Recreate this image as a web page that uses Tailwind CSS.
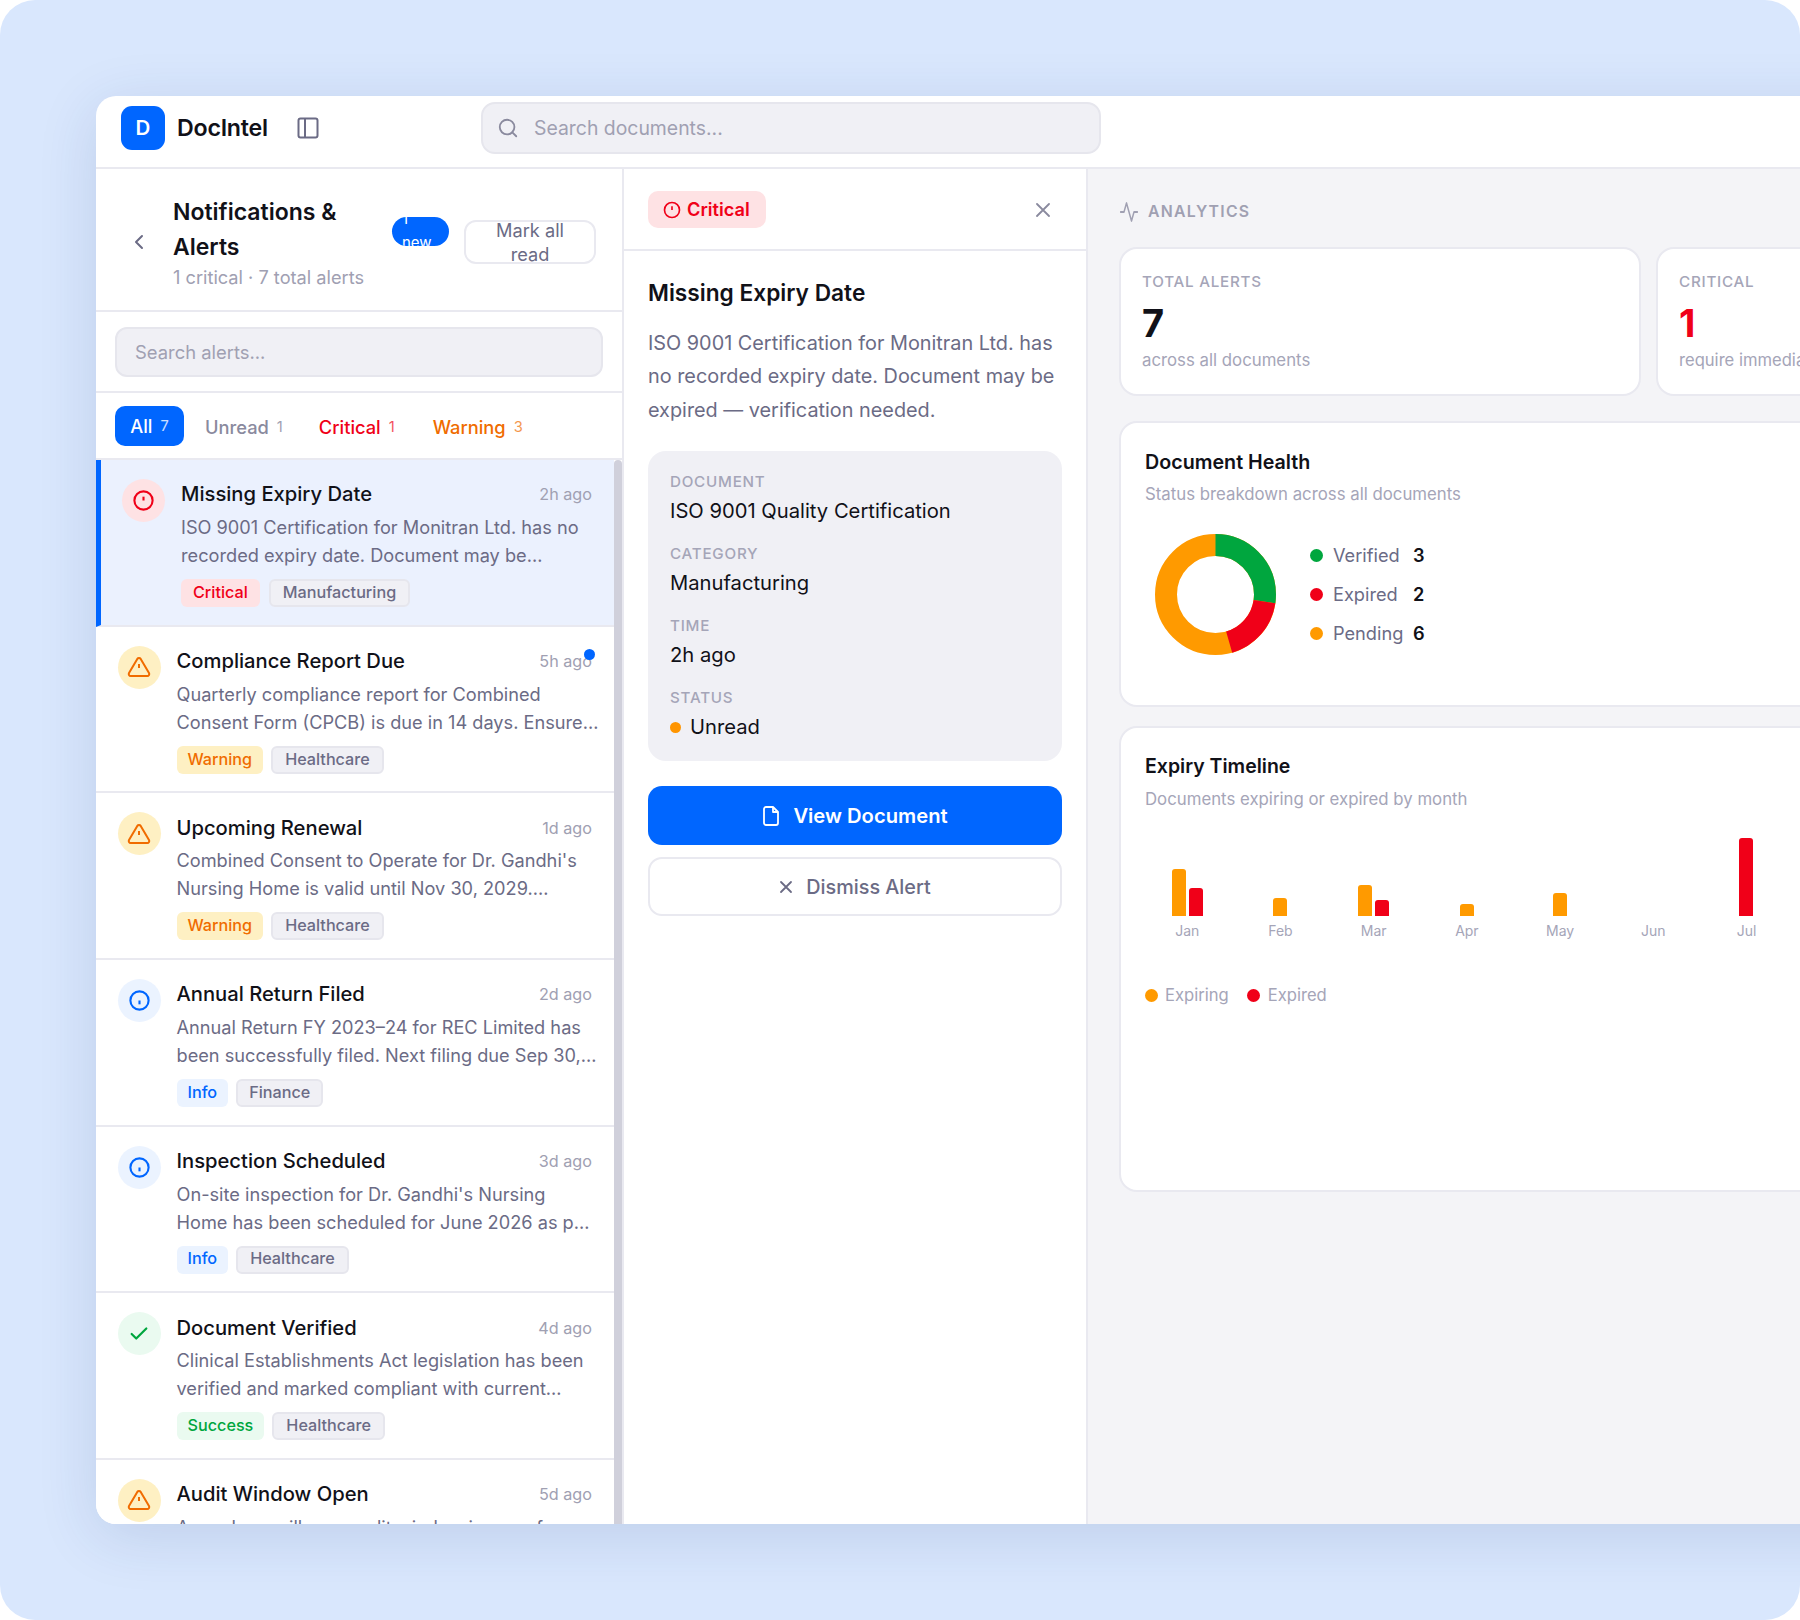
<!DOCTYPE html>
<html><head><meta charset="utf-8"><script src="https://cdn.jsdelivr.net/npm/@tailwindcss/browser@4"></script></head>
<body class="bg-white">
<div class="relative w-[1800px] h-[1620px] rounded-[35px] bg-[#d9e7fd] overflow-hidden font-['Inter','Liberation_Sans',sans-serif] text-[#111118]">
<div class="absolute left-[96px] top-[96px] w-[1800px] h-[1428px] rounded-[20px] bg-white overflow-hidden shadow-[0_12px_60px_rgba(30,60,120,0.14)] flex flex-col">
  <header class="h-[73px] shrink-0 flex items-center border-b-2 border-[#e9e9f0] pl-[25px] pb-[7px]">
    <div class="w-[44px] h-[44px] rounded-[11px] bg-[#0066ff] text-white flex items-center justify-center text-[20.5px] font-semibold">D</div>
    <div class="ml-[12px] text-[23.2px] font-semibold tracking-[-0.01em] w-[93px]">DocIntel</div>
    <svg class="ml-[26px]" width="24" height="24" viewBox="0 0 24 24" fill="none" stroke="#6b6b85" stroke-width="2"><rect x="2.5" y="2.5" width="19" height="19" rx="2"/><path d="M9 2.5v19"/></svg>
    <div class="ml-[161px] w-[620px] h-[52px] rounded-[14px] bg-[#f0f0f5] border-2 border-[#e6e6ed] flex items-center pl-[14px]">
      <svg width="22" height="22" viewBox="0 0 24 24" fill="none" stroke="#8a8a9e" stroke-width="2" stroke-linecap="round"><circle cx="11" cy="11" r="8"/><path d="M21 21l-4.3-4.3"/></svg>
      <span class="ml-[15px] text-[19.4px] text-[#a0a0b2] pt-[1px]">Search documents...</span>
    </div>
  </header>
  <div class="flex flex-1 min-h-0">
    <aside class="w-[528px] shrink-0 border-r-2 border-[#e9e9f0] flex flex-col">
      <div class="h-[143px] shrink-0 border-b-2 border-[#e9e9f0] flex items-center pl-[35px] pt-[5px]">
        <svg width="16" height="20" viewBox="0 0 16 20" fill="none" stroke="#6b6b85" stroke-width="2" stroke-linecap="round" stroke-linejoin="round"><path d="M11 4l-6 6 6 6"/></svg>
        <div class="ml-[26px] w-[219px] shrink-0 pt-[1px]">
          <div class="text-[23px] font-semibold leading-[35px]">Notifications &amp; Alerts</div>
          <div class="text-[18.2px] leading-[28px] text-[#a0a0b2] mt-[-2px]">1 critical · 7 total alerts</div>
        </div>
        <div class="w-[57px] h-[29px] rounded-full bg-[#0066ff] text-white text-[15px] leading-[24px] pl-[10px] overflow-hidden flex flex-col items-start justify-center mt-[-22px] shrink-0"><span>1</span><span>new</span></div>
        <div class="ml-[15px] w-[132px] h-[44px] rounded-[12px] border-2 border-[#e9e9f0] text-[18.2px] leading-[24px] text-[#6b6b85] text-center flex items-center justify-center overflow-hidden shrink-0"><span>Mark all<br>read</span></div>
      </div>
      <div class="h-[81px] shrink-0 border-b-2 border-[#e9e9f0] flex items-center pl-[19px]">
        <div class="w-[488px] h-[50px] rounded-[12px] bg-[#f0f0f5] border-2 border-[#e6e6ed] flex items-center pl-[18px] pt-[2px] text-[18.4px] text-[#a0a0b2]">Search alerts...</div>
      </div>
      <div class="h-[67px] shrink-0 border-b-2 border-[#e9e9f0] flex items-center pl-[19px] text-[18.3px]">
        <div class="w-[69px] h-[40px] rounded-[10px] bg-[#0066ff] text-white flex items-center justify-center gap-[8px] font-medium pt-[2px]"><span>All</span><span class="text-[14.7px] font-normal text-white/80">7</span></div>
        <div class="ml-[21px] flex items-center gap-[8px] text-[#8a8a9e] font-medium pt-[4px]"><span>Unread</span><span class="text-[14.7px] font-normal text-[#a0a0b2]">1</span></div>
        <div class="ml-[36px] flex items-center gap-[8px] text-[#f00018] font-medium pt-[4px]"><span>Critical</span><span class="text-[14.7px] font-normal opacity-70">1</span></div>
        <div class="ml-[38px] flex items-center gap-[8px] text-[#f06c00] font-medium pt-[4px]"><span>Warning</span><span class="text-[14.7px] font-normal opacity-70">3</span></div>
      </div>
      <div class="relative flex-1 min-h-0 overflow-hidden pr-[8px] bg-white">
        <div class="absolute right-0 top-0 bottom-0 w-[8px] bg-[#d0d0db] rounded-t-[4px]"></div>

        <article class="relative h-[166.67px] border-b-2 border-[#e9e9f0] bg-[#ebf1fe] border-l-[5px] border-l-[#0066ff] pl-[21px] pr-[22px] pt-[19px] flex gap-[16px]">
          <div class="w-[43px] h-[43px] rounded-full bg-[#fee2e4] flex items-center justify-center shrink-0"><svg width="23" height="23" viewBox="0 0 24 24" fill="none" stroke="#f00018" stroke-width="2.2"><circle cx="12" cy="12" r="9.5"/><path d="M12 8v4"/></svg></div>
          <div class="flex-1 min-w-0">
            <div class="flex justify-between items-center h-[30px] pt-[1px]"><span class="text-[20.2px] font-medium">Missing Expiry Date</span><span class="text-[16.2px] text-[#a0a0b2]">2h ago</span></div>
            <p class="text-[18.2px] leading-[28px] text-[#6b6b85] mt-[4px] whitespace-nowrap">ISO 9001 Certification for Monitran Ltd. has no<br>recorded expiry date. Document may be…</p>
            <div class="flex gap-[9px] mt-[10px]"><span class="h-[28px] px-[12px] pb-[2px] rounded-[6px] bg-[#fee2e4] text-[#f00018] text-[16.2px] font-medium flex items-center">Critical</span><span class="h-[28px] px-[12px] pb-[2px] rounded-[6px] bg-[#f0f0f5] border-2 border-[#e6e6ed] text-[#6b6b85] text-[16.2px] font-medium flex items-center">Manufacturing</span></div>
          </div>
        </article>

        <article class="relative h-[166.67px] border-b-2 border-[#e9e9f0] pl-[21.5px] pr-[22px] pt-[19px] flex gap-[16px]">
          <div class="w-[43px] h-[43px] rounded-full bg-[#fef0c3] flex items-center justify-center shrink-0"><svg width="24" height="24" viewBox="0 0 24 24" fill="none" stroke="#f06c00" stroke-width="2" stroke-linecap="round" stroke-linejoin="round"><path d="M10.3 3.9L2 18a2 2 0 0 0 1.7 3h16.6a2 2 0 0 0 1.7-3L13.7 3.9a2 2 0 0 0-3.4 0z"/><path d="M12 9v4" stroke-linecap="butt"/></svg></div>
          <div class="flex-1 min-w-0">
            <div class="flex justify-between items-center h-[30px] pt-[1px]"><span class="text-[20.2px] font-medium">Compliance Report Due</span><span class="text-[16.2px] text-[#a0a0b2]">5h ago</span></div>
            <p class="text-[18.2px] leading-[28px] text-[#6b6b85] mt-[4px] whitespace-nowrap">Quarterly compliance report for Combined<br>Consent Form (CPCB) is due in 14 days. Ensure…</p>
            <div class="flex gap-[8px] mt-[10px]"><span class="h-[28px] px-[11px] pb-[2px] rounded-[6px] bg-[#fef0c3] text-[#f06c00] text-[16.2px] font-medium flex items-center">Warning</span><span class="h-[28px] px-[12px] pb-[2px] rounded-[6px] bg-[#f0f0f5] border-2 border-[#e6e6ed] text-[#6b6b85] text-[16.2px] font-medium flex items-center">Healthcare</span></div>
          </div>
          <div class="absolute top-[22px] right-[19px] w-[11px] h-[11px] rounded-full bg-[#0066ff]"></div>
        </article>

        <article class="relative h-[166.67px] border-b-2 border-[#e9e9f0] pl-[21.5px] pr-[22px] pt-[19px] flex gap-[16px]">
          <div class="w-[43px] h-[43px] rounded-full bg-[#fef0c3] flex items-center justify-center shrink-0"><svg width="24" height="24" viewBox="0 0 24 24" fill="none" stroke="#f06c00" stroke-width="2" stroke-linecap="round" stroke-linejoin="round"><path d="M10.3 3.9L2 18a2 2 0 0 0 1.7 3h16.6a2 2 0 0 0 1.7-3L13.7 3.9a2 2 0 0 0-3.4 0z"/><path d="M12 9v4" stroke-linecap="butt"/></svg></div>
          <div class="flex-1 min-w-0">
            <div class="flex justify-between items-center h-[30px] pt-[1px]"><span class="text-[20.2px] font-medium">Upcoming Renewal</span><span class="text-[16.2px] text-[#a0a0b2]">1d ago</span></div>
            <p class="text-[18.2px] leading-[28px] text-[#6b6b85] mt-[4px] whitespace-nowrap">Combined Consent to Operate for Dr. Gandhi's<br>Nursing Home is valid until Nov 30, 2029.…</p>
            <div class="flex gap-[8px] mt-[10px]"><span class="h-[28px] px-[11px] pb-[2px] rounded-[6px] bg-[#fef0c3] text-[#f06c00] text-[16.2px] font-medium flex items-center">Warning</span><span class="h-[28px] px-[12px] pb-[2px] rounded-[6px] bg-[#f0f0f5] border-2 border-[#e6e6ed] text-[#6b6b85] text-[16.2px] font-medium flex items-center">Healthcare</span></div>
          </div>
        </article>

        <article class="relative h-[166.67px] border-b-2 border-[#e9e9f0] pl-[21.5px] pr-[22px] pt-[19px] flex gap-[16px]">
          <div class="w-[43px] h-[43px] rounded-full bg-[#ebf3ff] flex items-center justify-center shrink-0"><svg width="23" height="23" viewBox="0 0 24 24" fill="none" stroke="#0066ff" stroke-width="2.2"><circle cx="12" cy="12" r="9.5"/><path d="M12 12v4"/></svg></div>
          <div class="flex-1 min-w-0">
            <div class="flex justify-between items-center h-[30px] pt-[1px]"><span class="text-[20.2px] font-medium">Annual Return Filed</span><span class="text-[16.2px] text-[#a0a0b2]">2d ago</span></div>
            <p class="text-[18.2px] leading-[28px] text-[#6b6b85] mt-[4px] whitespace-nowrap">Annual Return FY 2023–24 for REC Limited has<br>been successfully filed. Next filing due Sep 30,…</p>
            <div class="flex gap-[8px] mt-[10px]"><span class="h-[28px] px-[11px] pb-[2px] rounded-[6px] bg-[#ebf3ff] text-[#0066ff] text-[16.2px] font-medium flex items-center">Info</span><span class="h-[28px] px-[11px] pb-[2px] rounded-[6px] bg-[#f0f0f5] border-2 border-[#e6e6ed] text-[#6b6b85] text-[16.2px] font-medium flex items-center">Finance</span></div>
          </div>
        </article>

        <article class="relative h-[166.67px] border-b-2 border-[#e9e9f0] pl-[21.5px] pr-[22px] pt-[19px] flex gap-[16px]">
          <div class="w-[43px] h-[43px] rounded-full bg-[#ebf3ff] flex items-center justify-center shrink-0"><svg width="23" height="23" viewBox="0 0 24 24" fill="none" stroke="#0066ff" stroke-width="2.2"><circle cx="12" cy="12" r="9.5"/><path d="M12 12v4"/></svg></div>
          <div class="flex-1 min-w-0">
            <div class="flex justify-between items-center h-[30px] pt-[1px]"><span class="text-[20.2px] font-medium">Inspection Scheduled</span><span class="text-[16.2px] text-[#a0a0b2]">3d ago</span></div>
            <p class="text-[18.2px] leading-[28px] text-[#6b6b85] mt-[4px] whitespace-nowrap">On-site inspection for Dr. Gandhi's Nursing<br>Home has been scheduled for June 2026 as p…</p>
            <div class="flex gap-[8px] mt-[10px]"><span class="h-[28px] px-[11px] pb-[2px] rounded-[6px] bg-[#ebf3ff] text-[#0066ff] text-[16.2px] font-medium flex items-center">Info</span><span class="h-[28px] px-[12px] pb-[2px] rounded-[6px] bg-[#f0f0f5] border-2 border-[#e6e6ed] text-[#6b6b85] text-[16.2px] font-medium flex items-center">Healthcare</span></div>
          </div>
        </article>

        <article class="relative h-[166.67px] border-b-2 border-[#e9e9f0] pl-[21.5px] pr-[22px] pt-[19px] flex gap-[16px]">
          <div class="w-[43px] h-[43px] rounded-full bg-[#eafaf0] flex items-center justify-center shrink-0"><svg width="22" height="22" viewBox="0 0 24 24" fill="none" stroke="#00a63e" stroke-width="2.4" stroke-linecap="round" stroke-linejoin="round"><path d="M20 6L9 17l-5-5"/></svg></div>
          <div class="flex-1 min-w-0">
            <div class="flex justify-between items-center h-[30px] pt-[1px]"><span class="text-[20.2px] font-medium">Document Verified</span><span class="text-[16.2px] text-[#a0a0b2]">4d ago</span></div>
            <p class="text-[18.2px] leading-[28px] text-[#6b6b85] mt-[4px] whitespace-nowrap">Clinical Establishments Act legislation has been<br>verified and marked compliant with current…</p>
            <div class="flex gap-[8px] mt-[10px]"><span class="h-[28px] px-[11px] pb-[2px] rounded-[6px] bg-[#eafaf0] text-[#00a63e] text-[16.2px] font-medium flex items-center">Success</span><span class="h-[28px] px-[12px] pb-[2px] rounded-[6px] bg-[#f0f0f5] border-2 border-[#e6e6ed] text-[#6b6b85] text-[16.2px] font-medium flex items-center">Healthcare</span></div>
          </div>
        </article>

        <article class="relative h-[166.67px] pl-[21.5px] pr-[22px] pt-[19px] flex gap-[16px]">
          <div class="w-[43px] h-[43px] rounded-full bg-[#fef0c3] flex items-center justify-center shrink-0"><svg width="24" height="24" viewBox="0 0 24 24" fill="none" stroke="#f06c00" stroke-width="2" stroke-linecap="round" stroke-linejoin="round"><path d="M10.3 3.9L2 18a2 2 0 0 0 1.7 3h16.6a2 2 0 0 0 1.7-3L13.7 3.9a2 2 0 0 0-3.4 0z"/><path d="M12 9v4" stroke-linecap="butt"/></svg></div>
          <div class="flex-1 min-w-0">
            <div class="flex justify-between items-center h-[30px] pt-[1px]"><span class="text-[20.2px] font-medium">Audit Window Open</span><span class="text-[16.2px] text-[#a0a0b2]">5d ago</span></div>
            <p class="text-[18.2px] leading-[28px] text-[#6b6b85] mt-[4px] whitespace-nowrap">Annual surveillance audit window is open for</p>
          </div>
        </article>
      </div>
    </aside>

    <section class="w-[464px] shrink-0 border-r-2 border-[#e9e9f0] flex flex-col">
      <div class="h-[82px] shrink-0 border-b-2 border-[#e9e9f0] flex items-center justify-between pl-[24px] pr-[36px] pt-[1px]">
        <div class="h-[37px] w-[118px] rounded-[10px] bg-[#fee2e4] text-[#f00018] flex items-center pl-[15px] gap-[6px] text-[18.2px] font-semibold"><svg width="18" height="18" viewBox="0 0 24 24" fill="none" stroke="#f00018" stroke-width="2.2"><circle cx="12" cy="12" r="10"/><path d="M12 7v5"/></svg>Critical</div>
        <svg width="14" height="14" viewBox="0 0 14 14" fill="none" stroke="#8a8a9e" stroke-width="1.8" stroke-linecap="round"><path d="M1 1l12 12M13 1L1 13"/></svg>
      </div>
      <div class="pl-[24px] pr-[24px] pt-[24px]">
        <h2 class="text-[22.7px] font-semibold leading-[35px]">Missing Expiry Date</h2>
        <p class="mt-[17px] text-[19.85px] leading-[33.3px] text-[#6b6b85] whitespace-nowrap">ISO 9001 Certification for Monitran Ltd. has<br>no recorded expiry date. Document may be<br>expired — verification needed.</p>
        <div class="mt-[24px] h-[310px] rounded-[18px] bg-[#f0f0f5] px-[22px] pt-[20px]">
          <div class="text-[15.2px] leading-[22px] tracking-[0.05em] font-medium text-[#a5a5b8]">DOCUMENT</div>
          <div class="text-[20.2px] leading-[30px] mt-[3px]">ISO 9001 Quality Certification</div>
          <div class="text-[15.2px] leading-[22px] tracking-[0.05em] font-medium text-[#a5a5b8] mt-[17.2px]">CATEGORY</div>
          <div class="text-[20.2px] leading-[30px] mt-[3px]">Manufacturing</div>
          <div class="text-[15.2px] leading-[22px] tracking-[0.05em] font-medium text-[#a5a5b8] mt-[17.2px]">TIME</div>
          <div class="text-[20.2px] leading-[30px] mt-[3px]">2h ago</div>
          <div class="text-[15.2px] leading-[22px] tracking-[0.05em] font-medium text-[#a5a5b8] mt-[17.2px]">STATUS</div>
          <div class="text-[20.2px] leading-[30px] mt-[3px] flex items-center gap-[9px]"><span class="w-[11px] h-[11px] rounded-full bg-[#ff9500]"></span>Unread</div>
        </div>
        <div class="mt-[25px] h-[59px] rounded-[14px] bg-[#0066ff] text-white flex items-center justify-center gap-[13px] text-[20.2px] font-semibold pt-[1px]">
          <svg width="18" height="20" viewBox="0 0 18 20" fill="none" stroke="white" stroke-width="1.8" stroke-linejoin="round"><path d="M2 3a2 2 0 0 1 2-2h7l5 5v11a2 2 0 0 1-2 2H4a2 2 0 0 1-2-2z"/><path d="M11 1v5h5"/></svg>View Document</div>
        <div class="mt-[12px] h-[59px] rounded-[14px] border-2 border-[#e9e9f0] text-[#6b6b85] flex items-center justify-center gap-[13px] text-[19.8px] font-medium pt-[2px]">
          <svg width="14" height="14" viewBox="0 0 14 14" fill="none" stroke="#6b6b85" stroke-width="1.8" stroke-linecap="round"><path d="M2 2l10 10M12 2L2 12"/></svg>Dismiss Alert</div>
      </div>
    </section>

    <main class="flex-1 min-w-0 bg-[#f4f4f7] pl-[31px] overflow-hidden">
      <div class="h-[78px] flex items-center gap-[9px] text-[#a0a0b2] pt-[8px]">
        <svg width="20" height="24" viewBox="0 0 24 24" preserveAspectRatio="none" fill="none" stroke="#a0a0b2" stroke-width="1.8" stroke-linecap="round" stroke-linejoin="round"><path d="M22 12h-4l-3 9L9 3l-3 9H2"/></svg>
        <span class="text-[15.8px] font-semibold tracking-[0.08em]">ANALYTICS</span>
      </div>
      <div class="flex gap-[15px] w-[1100px]">
        <div class="w-[522px] h-[149px] shrink-0 rounded-[18px] bg-white border-2 border-[#e9e9f0] pl-[21px] pt-[22px]">
          <div class="text-[15.2px] leading-[22px] font-medium tracking-[0.05em] text-[#a5a5b8]">TOTAL ALERTS</div>
          <div class="text-[38px] leading-[44px] font-bold mt-[8px]">7</div>
          <div class="text-[16.8px] leading-[24px] text-[#a5a5b8] mt-[3px]">across all documents</div>
        </div>
        <div class="w-[522px] h-[149px] shrink-0 rounded-[18px] bg-white border-2 border-[#e9e9f0] pl-[21px] pt-[22px]">
          <div class="text-[15.2px] leading-[22px] font-medium tracking-[0.05em] text-[#a5a5b8]">CRITICAL</div>
          <div class="text-[38px] leading-[44px] font-bold mt-[8px] text-[#f00018]">1</div>
          <div class="text-[16.6px] leading-[24px] text-[#a5a5b8] mt-[3px]">require immediate action</div>
        </div>
      </div>
      <div class="mt-[25px] w-[900px] h-[286px] rounded-[18px] bg-white border-2 border-[#e9e9f0] pl-[24px] pt-[24px]">
        <div class="text-[19.7px] leading-[30px] font-semibold">Document Health</div>
        <div class="text-[16.8px] leading-[24px] text-[#a5a5b8] mt-[5px]">Status breakdown across all documents</div>
        <div class="flex items-center mt-[28px] pl-[10px]">
          <svg width="121" height="121" viewBox="0 0 121 121" class="shrink-0 -rotate-90">
            <circle cx="60.5" cy="60.5" r="49.5" fill="none" stroke="#ff9a00" stroke-width="22"/>
            <circle cx="60.5" cy="60.5" r="49.5" fill="none" stroke="#00a63e" stroke-width="22" stroke-dasharray="84.83 311.02"/>
            <circle cx="60.5" cy="60.5" r="49.5" fill="none" stroke="#f00018" stroke-width="22" stroke-dasharray="56.55 311.02" stroke-dashoffset="-84.83"/>
          </svg>
          <div class="ml-[34px] flex flex-col gap-[12px] text-[18.2px] leading-[27px]">
            <div class="flex items-center"><span class="w-[13px] h-[13px] rounded-full bg-[#00a63e]"></span><span class="ml-[10px] w-[80px] text-[#6b6b85]">Verified</span><span class="font-semibold">3</span></div>
            <div class="flex items-center"><span class="w-[13px] h-[13px] rounded-full bg-[#f00018]"></span><span class="ml-[10px] w-[80px] text-[#6b6b85]">Expired</span><span class="font-semibold">2</span></div>
            <div class="flex items-center"><span class="w-[13px] h-[13px] rounded-full bg-[#ff9a00]"></span><span class="ml-[10px] w-[80px] text-[#6b6b85]">Pending</span><span class="font-semibold">6</span></div>
          </div>
        </div>
      </div>
      <div class="mt-[19px] w-[900px] h-[466px] rounded-[18px] bg-white border-2 border-[#e9e9f0] pl-[24px] pt-[23px]">
        <div class="text-[19.5px] leading-[30px] font-semibold">Expiry Timeline</div>
        <div class="text-[16.8px] leading-[24px] text-[#a5a5b8] mt-[6px]">Documents expiring or expired by month</div>
        <div class="mt-[15px] flex gap-[10.67px] pl-[1px]">
          <div class="w-[82.55px] flex flex-col items-center"><div class="h-[90px] flex items-end gap-[3px]"><span class="w-[14px] h-[47px] rounded-t-[3px] bg-[#ff9a00]"></span><span class="w-[14px] h-[28px] rounded-t-[3px] bg-[#f00018]"></span></div><span class="mt-[5px] text-[14px] leading-[20px] text-[#a5a5b8]">Jan</span></div>
          <div class="w-[82.55px] flex flex-col items-center"><div class="h-[90px] flex items-end gap-[3px]"><span class="w-[14px] h-[18px] rounded-t-[3px] bg-[#ff9a00]"></span></div><span class="mt-[5px] text-[14px] leading-[20px] text-[#a5a5b8]">Feb</span></div>
          <div class="w-[82.55px] flex flex-col items-center"><div class="h-[90px] flex items-end gap-[3px]"><span class="w-[14px] h-[31px] rounded-t-[3px] bg-[#ff9a00]"></span><span class="w-[14px] h-[16px] rounded-t-[3px] bg-[#f00018]"></span></div><span class="mt-[5px] text-[14px] leading-[20px] text-[#a5a5b8]">Mar</span></div>
          <div class="w-[82.55px] flex flex-col items-center"><div class="h-[90px] flex items-end gap-[3px]"><span class="w-[14px] h-[12px] rounded-t-[3px] bg-[#ff9a00]"></span></div><span class="mt-[5px] text-[14px] leading-[20px] text-[#a5a5b8]">Apr</span></div>
          <div class="w-[82.55px] flex flex-col items-center"><div class="h-[90px] flex items-end gap-[3px]"><span class="w-[14px] h-[23px] rounded-t-[3px] bg-[#ff9a00]"></span></div><span class="mt-[5px] text-[14px] leading-[20px] text-[#a5a5b8]">May</span></div>
          <div class="w-[82.55px] flex flex-col items-center"><div class="h-[90px]"></div><span class="mt-[5px] text-[14px] leading-[20px] text-[#a5a5b8]">Jun</span></div>
          <div class="w-[82.55px] flex flex-col items-center"><div class="h-[90px] flex items-end gap-[3px]"><span class="w-[14px] h-[78px] rounded-t-[3px] bg-[#f00018]"></span></div><span class="mt-[5px] text-[14px] leading-[20px] text-[#a5a5b8]">Jul</span></div>
        </div>
        <div class="mt-[42px] flex items-center text-[16.6px] leading-[24px] text-[#a5a5b8]">
          <span class="w-[13px] h-[13px] rounded-full bg-[#ff9a00]"></span><span class="ml-[7px]">Expiring</span>
          <span class="ml-[18px] w-[13px] h-[13px] rounded-full bg-[#f00018]"></span><span class="ml-[8px]">Expired</span>
        </div>
      </div>
    </main>
  </div>
</div>
</div>
</body></html>
